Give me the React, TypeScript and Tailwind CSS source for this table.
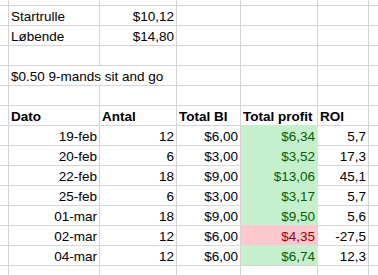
import React from 'react'

type Fill = 'none' | 'good' | 'bad'

type Row = {
  dato: string
  antal: string
  bi: string
  profit: string
  roi: string
  fill: Fill
}

const rows: Row[] = [
  { dato: '19-feb', antal: '12', bi: '$6,00', profit: '$6,34', roi: '5,7', fill: 'good' },
  { dato: '20-feb', antal: '6', bi: '$3,00', profit: '$3,52', roi: '17,3', fill: 'good' },
  { dato: '22-feb', antal: '18', bi: '$9,00', profit: '$13,06', roi: '45,1', fill: 'good' },
  { dato: '25-feb', antal: '6', bi: '$3,00', profit: '$3,17', roi: '5,7', fill: 'good' },
  { dato: '01-mar', antal: '18', bi: '$9,00', profit: '$9,50', roi: '5,6', fill: 'good' },
  { dato: '02-mar', antal: '12', bi: '$6,00', profit: '$4,35', roi: '-27,5', fill: 'bad' },
  { dato: '04-mar', antal: '12', bi: '$6,00', profit: '$6,74', roi: '12,3', fill: 'good' },
]

// plain gridline cell
function Cell({
  children,
  right,
  bold,
  className = '',
}: {
  children?: React.ReactNode
  right?: boolean
  bold?: boolean
  className?: string
}) {
  return (
    <div
      className={`border-r border-b border-[#d4d4d4] whitespace-nowrap leading-[19px] pt-px ${
        right ? 'text-right pr-[2px]' : 'pl-[2px]'
      } ${bold ? 'font-bold' : ''} ${className}`}
    >
      {children}
    </div>
  )
}

function Blank({ n }: { n: number }) {
  return (
    <>
      {Array.from({ length: n }).map((_, i) => (
        <Cell key={i} />
      ))}
    </>
  )
}

export default function App() {
  return (
    <div
      className="w-[378px] h-[275px] overflow-hidden bg-white text-black text-[13.5px]"
      style={{ fontFamily: '"Liberation Sans", Arial, sans-serif' }}
    >
      <div className="grid grid-cols-[9px_91px_77px_64px_77px_51px_1fr] grid-rows-[6px_repeat(13,20px)_1fr] h-full">
        {/* partial top row */}
        <Blank n={6} />
        <div className="border-b border-[#d4d4d4]" />

        {/* Startrulle */}
        <Cell />
        <Cell>Startrulle</Cell>
        <Cell right>$10,12</Cell>
        <Blank n={3} />
        <div className="border-b border-[#d4d4d4]" />

        {/* Løbende */}
        <Cell />
        <Cell>Løbende</Cell>
        <Cell right>$14,80</Cell>
        <Blank n={3} />
        <div className="border-b border-[#d4d4d4]" />

        {/* empty */}
        <Blank n={6} />
        <div className="border-b border-[#d4d4d4]" />

        {/* note row, text overflows into column B */}
        <Cell />
        <Cell className="!border-r-transparent">$0.50 9-mands sit and go</Cell>
        <Blank n={4} />
        <div className="border-b border-[#d4d4d4]" />

        {/* empty */}
        <Blank n={6} />
        <div className="border-b border-[#d4d4d4]" />

        {/* header */}
        <Cell />
        <Cell bold>Dato</Cell>
        <Cell bold>Antal</Cell>
        <Cell bold>Total BI</Cell>
        <Cell bold className="!border-b-[#c6efce]">Total profit</Cell>
        <Cell bold>ROI</Cell>
        <div className="border-b border-[#d4d4d4]" />

        {rows.map((r, i) => {
          const next = rows[i + 1]
          const fillCls =
            r.fill === 'good'
              ? 'bg-[#c6efce] text-[#006100] !border-r-[#c6efce]'
              : 'bg-[#ffc7ce] text-[#9c0006] !border-r-[#ffc7ce]'
          const bottomCls = !next
            ? ''
            : next.fill === 'good'
              ? '!border-b-[#c6efce]'
              : '!border-b-[#ffc7ce]'
          return (
            <React.Fragment key={r.dato}>
              <Cell />
              <Cell right>{r.dato}</Cell>
              <Cell right>{r.antal}</Cell>
              <Cell right>{r.bi}</Cell>
              <Cell right className={`${fillCls} ${bottomCls}`}>
                {r.profit}
              </Cell>
              <Cell right>{r.roi}</Cell>
              <div className="border-b border-[#d4d4d4]" />
            </React.Fragment>
          )
        })}

        {/* partial bottom row */}
        {Array.from({ length: 6 }).map((_, i) => (
          <div key={i} className="border-r border-[#d4d4d4]" />
        ))}
        <div />
      </div>
    </div>
  )
}
